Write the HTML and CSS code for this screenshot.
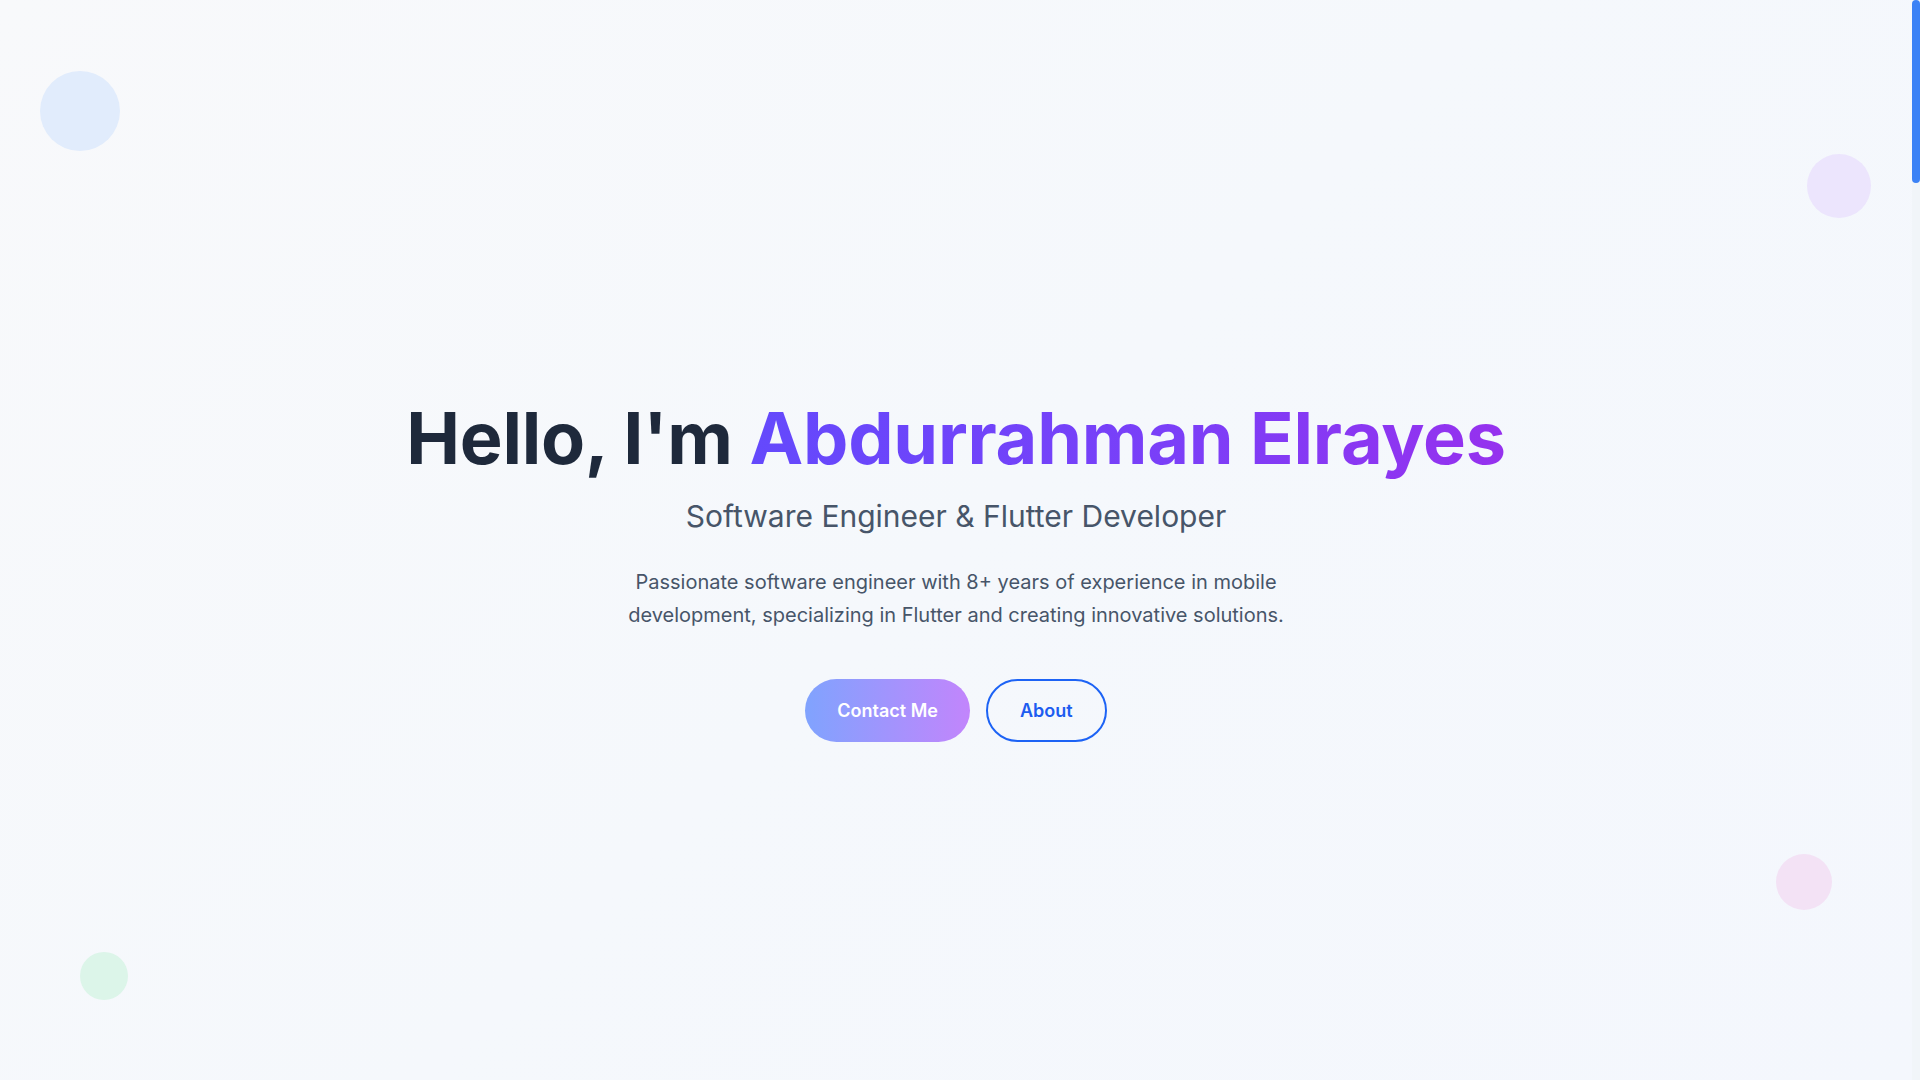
FILE: index.html
```html
<!DOCTYPE html>
<html lang="en">
<head>
<meta charset="utf-8">
<title>Abdurrahman Elrayes</title>
<link rel="stylesheet" href="styles.css">
</head>
<body>
<div class="page">
  <main class="main">
    <section class="hero" id="home">
      <span class="bubble bubble-blue"></span>
      <span class="bubble bubble-purple"></span>
      <span class="bubble bubble-pink"></span>
      <span class="bubble bubble-green"></span>
      <div class="hero-content">
        <h1 class="hero-title">Hello, I'm <span class="gradient-text">Abdurrahman Elrayes</span></h1>
        <p class="hero-subtitle">Software Engineer &amp; Flutter Developer</p>
        <p class="hero-text">Passionate software engineer with 8+ years of experience in mobile development, specializing in Flutter and creating innovative solutions.</p>
        <div class="hero-actions">
          <a class="btn btn-primary" href="#contact">Contact Me</a>
          <a class="btn btn-outline" href="#about">About</a>
        </div>
      </div>
    </section>
  </main>
  <div class="scrollbar" aria-hidden="true">
    <div class="scrollbar-thumb"></div>
  </div>
</div>
</body>
</html>
```

FILE: styles.css
```css
* { box-sizing: border-box; }

html, body {
  margin: 0;
  padding: 0;
  overflow: hidden;
}

body {
  font-family: "Inter", "Noto Sans", sans-serif;
  background: #f6f8fc;
  color: #1e293b;
}

.page {
  display: flex;
  height: 1080px;
}

.main {
  flex: 1;
  min-width: 0;
}

.scrollbar {
  width: 8px;
  flex: none;
  background: #f1f5f9;
}

.scrollbar-thumb {
  height: 183px;
  background: #3b82f6;
  border-radius: 4px;
}

.hero {
  position: relative;
  height: 1080px;
  padding-top: 64px;
  display: flex;
  align-items: center;
  justify-content: center;
  overflow: hidden;
  background: linear-gradient(135deg, #f8f9fb 0%, #f5f8fc 50%, #f4f7fd 100%);
}

.bubble {
  position: absolute;
  border-radius: 50%;
}
.bubble-blue { width: 80px; height: 80px; left: 40px; top: 71px; background: #e1ecfc; }
.bubble-purple { width: 64px; height: 64px; right: 41px; top: 154px; background: #ece5fd; }
.bubble-pink { width: 56px; height: 56px; right: 80px; top: 854px; background: #f3e2f5; }
.bubble-green { width: 48px; height: 48px; left: 80px; top: 952px; background: #dcf5e9; }

.hero-content {
  position: relative;
  display: flex;
  flex-direction: column;
  align-items: center;
  text-align: center;
}

.hero-title {
  margin: 0 0 24px;
  font-size: 72px;
  line-height: 1;
  font-weight: 700;
  letter-spacing: -0.25px;
  color: #1e293b;
}

.gradient-text {
  background: linear-gradient(90deg, #6449fc 0%, #7a3ff8 55%, #9631ee 100%);
  -webkit-background-clip: text;
  background-clip: text;
  color: transparent;
}

.hero-subtitle {
  margin: 0 0 32px;
  font-size: 30px;
  line-height: 36px;
  font-weight: 400;
  color: #475569;
}

.hero-text {
  margin: 0 0 48px;
  max-width: 672px;
  font-size: 20px;
  line-height: 32.5px;
  color: #475569;
}

.hero-actions {
  display: flex;
  gap: 16px;
}

.btn {
  display: inline-flex;
  align-items: center;
  justify-content: center;
  padding: 16px 32px;
  border-radius: 9999px;
  font-size: 18px;
  line-height: 27px;
  font-weight: 600;
  text-decoration: none;
}

.btn-primary {
  background: linear-gradient(90deg, #80a3fe 0%, #c285fc 100%);
  color: #ffffff;
}

.btn-outline {
  border: 2px solid #1d63f5;
  color: #1d5cf0;
  background: transparent;
}
```
